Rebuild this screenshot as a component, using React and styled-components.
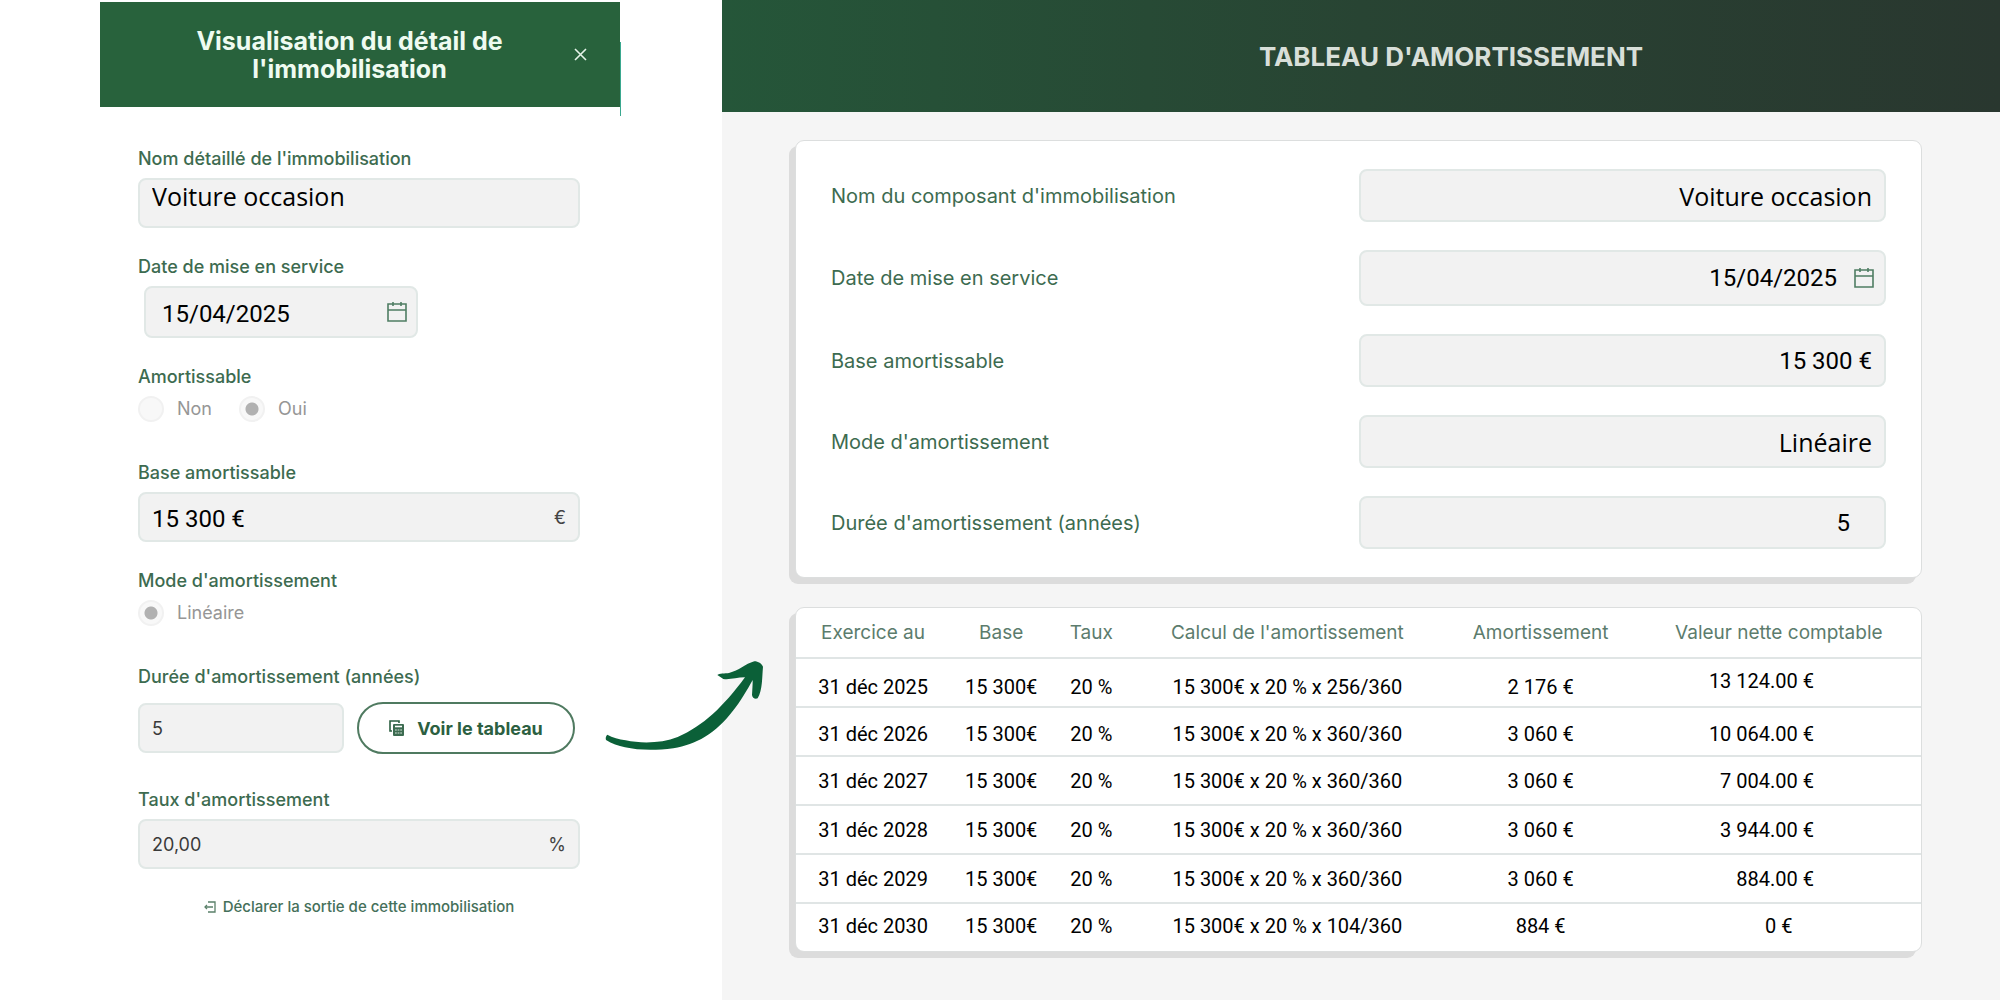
import React from 'react';
import styled, { createGlobalStyle } from 'styled-components';

const GlobalStyle = createGlobalStyle`
  * {
    box-sizing: border-box;
  }
  body {
    margin: 0;
    background-color: #fff;
    font-family: Inter, sans-serif;
  }
`;

const Page = styled.div`
  display: grid;
  grid-template-columns: 361fr 639fr;
  min-height: 100vh;
`;

/* ---------- left : detail of the asset ---------- */

const Detail = styled.aside`
  padding: 2px 102px 0 100px;
`;

const DetailHeader = styled.header`
  position: relative;
  display: flex;
  align-items: center;
  height: 105px;
  padding: 0 33px 0 25px;
  background-color: #28623c;

  &::after {
    content: '';
    position: absolute;
    top: 40px;
    right: -1px;
    bottom: -9px;
    width: 1px;
    background-color: #3aa88f;
  }
`;

const DetailTitle = styled.h1`
  flex: 1;
  margin: 0;
  color: #effbf1;
  font-size: 25px;
  font-weight: 700;
  line-height: 28px;
  text-align: center;
`;

const CloseButton = styled.button`
  display: flex;
  padding: 0;
  border: none;
  background: none;
  color: #e6f3e9;
  cursor: pointer;
`;

const Form = styled.form`
  display: flex;
  flex-direction: column;
  gap: 28px;
  padding: 41px 40px 0 38px;
`;

const Group = styled.div`
  display: flex;
  flex-direction: column;
  align-items: ${props => (props.$narrow ? 'flex-start' : 'stretch')};
  gap: ${props => (props.$loose ? '14px' : '8px')};
  margin-bottom: ${props => (props.$loose ? '7px' : '0')};
`;

const RadioGroup = styled.fieldset`
  display: flex;
  flex-direction: column;
  gap: 8px;
  min-width: 0;
  margin: 0;
  padding: 0 0 12px;
  border: none;
`;

const Label = styled.label`
  color: #3d6b50;
  font-size: 18px;
  font-weight: 500;
  line-height: 22px;
`;

const RadioRow = styled.div`
  display: flex;
  gap: 27px;
`;

const RadioLabel = styled.label`
  display: flex;
  align-items: center;
  gap: 13px;
  color: #969696;
  font-size: 18px;
  line-height: 26px;
`;

const Radio = styled.input`
  appearance: none;
  width: 26px;
  height: 26px;
  margin: 0;
  border: 2px solid #f1f1f1;
  border-radius: 50%;
  background-color: #f8f8f8;

  &:checked {
    background-image: radial-gradient(circle, #b1b1b1 6px, transparent 7px);
  }
`;

const FieldBox = styled.div`
  display: flex;
  align-items: center;
  gap: 16px;
  height: ${props => props.$height || 50}px;
  width: ${props => props.$width || 'auto'};
  margin-left: ${props => (props.$indent ? '6px' : '0')};
  padding: 0 ${props => props.$end || 12}px 0 ${props => (props.$indent ? '16px' : '12px')};
  border: 2px solid #e1e8e6;
  border-radius: 8px;
  background-color: #f2f2f2;
  color: #444;
`;

const Input = styled.input`
  flex: 1;
  min-width: 0;
  height: 100%;
  padding: 0;
  border: none;
  outline: none;
  background: none;
  color: #3a3a3a;
  font-family: Inter, sans-serif;
  font-size: 18px;
`;

const TextValue = styled(Input)`
  padding-bottom: ${props => (props.$raised ? '14px' : '0')};
  color: #000;
  font-family: 'Open Sans', sans-serif;
  font-size: 25px;
  text-align: ${props => props.$align || 'left'};
`;

const NumberValue = styled(TextValue)`
  padding-top: ${props => (props.$align ? '0' : '4px')};
  font-family: Roboto, sans-serif;
  font-size: 24px;
`;

const Suffix = styled.span`
  font-size: 18px;
`;

const InlineRow = styled.div`
  display: flex;
  align-items: center;
  gap: 13px;
`;

const TableButton = styled.button`
  display: flex;
  align-items: center;
  justify-content: center;
  gap: 13px;
  width: 218px;
  height: 52px;
  padding: 0;
  border: 2px solid #4f7a60;
  border-radius: 26px;
  background-color: #fff;
  color: #2c5f41;
  font-family: Inter, sans-serif;
  font-size: 18px;
  font-weight: 700;
  cursor: pointer;
`;

const ExitLink = styled.a`
  display: flex;
  align-items: center;
  justify-content: center;
  gap: 7px;
  color: #45705a;
  font-size: 15px;
  font-weight: 500;
  line-height: 20px;
  text-decoration: none;
`;

/* ---------- right : amortization table ---------- */

const Board = styled.main`
  position: relative;
  background-color: #f5f5f5;
`;

const BoardHeader = styled.header`
  display: flex;
  align-items: center;
  justify-content: center;
  height: 112px;
  padding-left: 180px;
  background-image: linear-gradient(90deg, #255639, #284433 50%, #29372f);
`;

const BoardTitle = styled.h2`
  margin: 0;
  color: #d8dfd9;
  font-size: 26px;
  font-weight: 700;
`;

const Cards = styled.div`
  display: flex;
  flex-direction: column;
  gap: 29px;
  padding: 28px 78px 48px 73px;
`;

const Card = styled.section`
  border: 1px solid #dcdede;
  border-radius: 9px;
  background-color: #fff;
  box-shadow: -6px 6px 0 #dcdcdc;
`;

const Summary = styled(Card)`
  display: flex;
  flex-direction: column;
  gap: 28px;
  padding: 28px 35px;
`;

const SummaryRow = styled.div`
  display: grid;
  grid-template-columns: 1fr 1fr;
  align-items: center;
`;

const SummaryLabel = styled(Label)`
  font-size: 20px;
  font-weight: 400;
`;

const Table = styled.table`
  width: 100%;
  table-layout: fixed;
  border-collapse: separate;
  border-spacing: 0;
`;

const Th = styled.th`
  height: 51px;
  padding: 0;
  border-bottom: 2px solid #e0e5e5;
  color: #5c7c6d;
  font-size: 19px;
  font-weight: 400;
`;

const Td = styled.td`
  height: 49px;
  padding: ${props => (props.$amount ? '0 107px 0 0' : '0')};
  border-bottom: 2px solid #e0e5e5;
  color: #000;
  font-family: Roboto, sans-serif;
  font-size: 20px;
  line-height: 24px;
  text-align: ${props => (props.$amount ? 'right' : 'center')};

  tr:first-child > & {
    padding-top: ${props => (props.$amount ? '0' : '8px')};
    padding-bottom: ${props => (props.$amount ? '4px' : '0')};
  }
  tr:nth-child(2) > & {
    padding-top: 5px;
  }
  tr:last-child > & {
    height: 47px;
    padding-bottom: 4px;
    border-bottom: none;
  }
`;

const Arrow = styled.svg`
  position: absolute;
  top: 650px;
  left: -127px;
`;

function CalendarIcon() {
  return (
    <svg width="22" height="22" viewBox="0 0 22 22" fill="none" stroke="#4f7d63" strokeWidth="1.600" aria-hidden="true">
      <path d="M2 3h18v17H2zM2 9h18M7 1v4M15 1v4" />
    </svg>
  );
}

function CloseIcon() {
  return (
    <svg width="13" height="13" viewBox="0 0 13 13" stroke="currentColor" strokeWidth="1.600" aria-hidden="true">
      <path d="M1 1l11 11M12 1L1 12" />
    </svg>
  );
}

function CalculatorIcon() {
  return (
    <svg width="15" height="16" viewBox="0 0 15 16" fill="none" aria-hidden="true">
      <path d="M3 11H1V1h9v2" stroke="#2c5f41" strokeWidth="1.600" />
      <rect x="4" y="4" width="11" height="12" rx="1" fill="#3c6b50" />
      <path d="M6 6.500h7" stroke="#fff" strokeWidth="1.600" />
      <path d="M6 10h7M6 13h7" stroke="#d5e3da" strokeWidth="1.200" strokeDasharray="1.800 0.800" />
    </svg>
  );
}

function ExitIcon() {
  return (
    <svg width="12" height="12" viewBox="0 0 12 12" fill="none" stroke="#5a8069" strokeWidth="1.300" aria-hidden="true">
      <path d="M4 1h7v10H4M1 6h8" />
      <path d="M3 4L1 6l2 2" />
    </svg>
  );
}

const columns = [
  ['Exercice au', 154],
  ['Base', 102],
  ['Taux', 78],
  ["Calcul de l'amortissement", 314],
  ['Amortissement', 192],
  ['Valeur nette comptable', 284],
];

const years = [
  { end: '31 déc 2025', days: 256, amount: '2 176 €', net: '13 124.00 €' },
  { end: '31 déc 2026', days: 360, amount: '3 060 €', net: '10 064.00 €' },
  { end: '31 déc 2027', days: 360, amount: '3 060 €', net: '7 004.00 €' },
  { end: '31 déc 2028', days: 360, amount: '3 060 €', net: '3 944.00 €' },
  { end: '31 déc 2029', days: 360, amount: '3 060 €', net: '884.00 €' },
  { end: '31 déc 2030', days: 104, amount: '884 €', net: '0 €' },
];

function DetailPanel() {
  return (
    <Detail>
      <DetailHeader>
        <DetailTitle>Visualisation du détail de l'immobilisation</DetailTitle>
        <CloseButton type="button" aria-label="Fermer"><CloseIcon /></CloseButton>
      </DetailHeader>
      <Form>
        <Group>
          <Label htmlFor="nom">Nom détaillé de l'immobilisation</Label>
          <FieldBox>
            <TextValue id="nom" readOnly $raised defaultValue="Voiture occasion" />
          </FieldBox>
        </Group>

        <Group $narrow>
          <Label htmlFor="date">Date de mise en service</Label>
          <FieldBox $height={52} $width="62%" $indent $end={8}>
            <NumberValue id="date" readOnly defaultValue="15/04/2025" />
            <CalendarIcon />
          </FieldBox>
        </Group>

        <RadioGroup aria-labelledby="amortissable">
          <Label as="span" id="amortissable">Amortissable</Label>
          <RadioRow>
            <RadioLabel><Radio type="radio" name="amortissable" disabled />Non</RadioLabel>
            <RadioLabel><Radio type="radio" name="amortissable" disabled defaultChecked />Oui</RadioLabel>
          </RadioRow>
        </RadioGroup>

        <Group>
          <Label htmlFor="base">Base amortissable</Label>
          <FieldBox>
            <NumberValue id="base" readOnly defaultValue="15 300 €" />
            <Suffix>€</Suffix>
          </FieldBox>
        </Group>

        <RadioGroup aria-labelledby="mode">
          <Label as="span" id="mode">Mode d'amortissement</Label>
          <RadioRow>
            <RadioLabel><Radio type="radio" name="mode" disabled defaultChecked />Linéaire</RadioLabel>
          </RadioRow>
        </RadioGroup>

        <Group $loose>
          <Label htmlFor="duree">Durée d'amortissement (années)</Label>
          <InlineRow>
            <FieldBox $width="206px">
              <Input id="duree" readOnly defaultValue="5" />
            </FieldBox>
            <TableButton type="button"><CalculatorIcon />Voir le tableau</TableButton>
          </InlineRow>
        </Group>

        <Group>
          <Label htmlFor="taux">Taux d'amortissement</Label>
          <FieldBox>
            <Input id="taux" readOnly defaultValue="20,00" />
            <Suffix>%</Suffix>
          </FieldBox>
        </Group>

        <ExitLink href="#sortie"><ExitIcon />Déclarer la sortie de cette immobilisation</ExitLink>
      </Form>
    </Detail>
  );
}

function App() {
  return (
    <>
      <GlobalStyle />
      <Page>
        <DetailPanel />
        <Board>
          <BoardHeader>
            <BoardTitle>TABLEAU D'AMORTISSEMENT</BoardTitle>
          </BoardHeader>
          <Cards>
            <Summary>
              <SummaryRow>
                <SummaryLabel htmlFor="composant">Nom du composant d'immobilisation</SummaryLabel>
                <FieldBox $height={53}>
                  <TextValue id="composant" readOnly $align="right" defaultValue="Voiture occasion" />
                </FieldBox>
              </SummaryRow>
              <SummaryRow>
                <SummaryLabel htmlFor="service">Date de mise en service</SummaryLabel>
                <FieldBox $height={56} $end={9}>
                  <NumberValue id="service" readOnly $align="right" defaultValue="15/04/2025" />
                  <CalendarIcon />
                </FieldBox>
              </SummaryRow>
              <SummaryRow>
                <SummaryLabel htmlFor="montant">Base amortissable</SummaryLabel>
                <FieldBox $height={53}>
                  <NumberValue id="montant" readOnly $align="right" defaultValue="15 300 €" />
                </FieldBox>
              </SummaryRow>
              <SummaryRow>
                <SummaryLabel htmlFor="type">Mode d'amortissement</SummaryLabel>
                <FieldBox $height={53}>
                  <TextValue id="type" readOnly $align="right" defaultValue="Linéaire" />
                </FieldBox>
              </SummaryRow>
              <SummaryRow>
                <SummaryLabel htmlFor="annees">Durée d'amortissement (années)</SummaryLabel>
                <FieldBox $height={53} $end={34}>
                  <NumberValue id="annees" readOnly $align="right" defaultValue="5" />
                </FieldBox>
              </SummaryRow>
            </Summary>

            <Card>
              <Table>
                <colgroup>
                  {columns.map(([name, width]) => <col key={name} width={width} />)}
                </colgroup>
                <thead>
                  <tr>
                    {columns.map(([name]) => <Th key={name} scope="col">{name}</Th>)}
                  </tr>
                </thead>
                <tbody>
                  {years.map((year) => (
                    <tr key={year.end}>
                      <Td>{year.end}</Td>
                      <Td>15 300€</Td>
                      <Td>20 %</Td>
                      <Td>15 300€ x 20 % x {year.days}/360</Td>
                      <Td>{year.amount}</Td>
                      <Td $amount={year.net !== '0 €'}>{year.net}</Td>
                    </tr>
                  ))}
                </tbody>
              </Table>
            </Card>
          </Cards>
          <Arrow width="180" height="110" viewBox="0 0 540 330" fill="#0b6038" aria-hidden="true">
            <path d="M37 254C52 263 72 268 92 271C140 281 200 280 248 261C325 228 385 170 450 82C425 82 405 90 385 87L367 75C372 70 390 71 402 69C432 62 450 42 478 34C490 34 500 41 504 50C501 80 503 120 488 145C480 149 472 143 471 135C472 118 473 105 473 90C440 150 395 222 330 260C300 278 270 288 235 295C180 302 130 301 90 292C70 287 50 281 33 270C31 264 33 257 37 254Z" />
          </Arrow>
        </Board>
      </Page>
    </>
  );
}

export default App;
